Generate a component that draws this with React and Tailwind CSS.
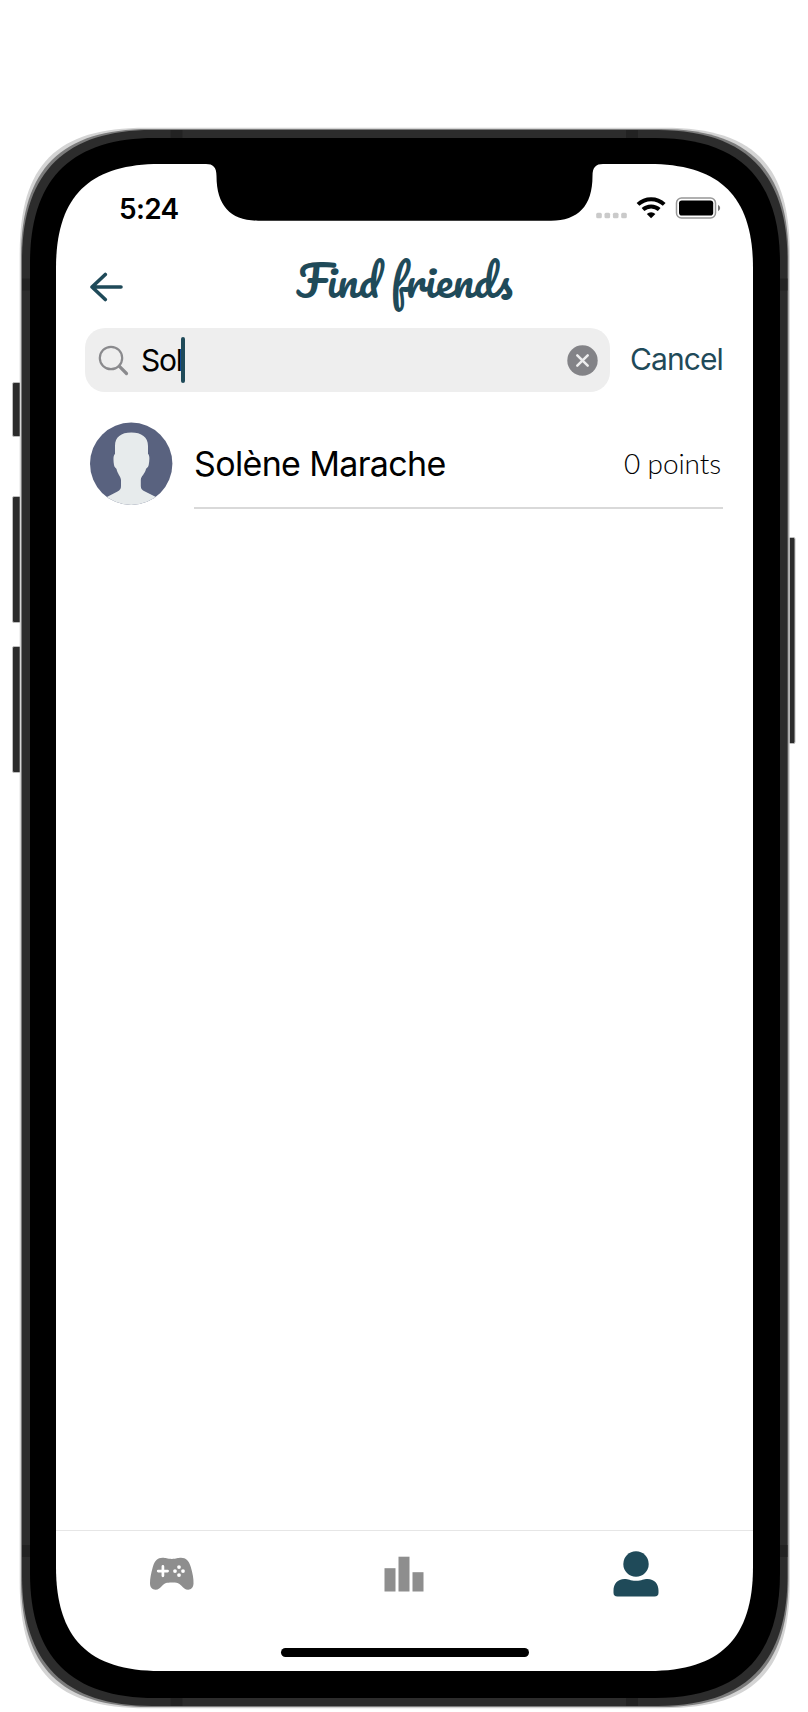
import React from "react";

const TEAL = "#1f4a59";

// Closed rounded rectangle with continuous-curvature corners.
function squircle(l, t, r, b, e, c) {
  const k = e * c;
  return [
    `M${l} ${t + e}`,
    `C${l} ${t + k} ${l + k} ${t} ${l + e} ${t}`,
    `H${r - e}`,
    `C${r - k} ${t} ${r} ${t + k} ${r} ${t + e}`,
    `V${b - e}`,
    `C${r} ${b - k} ${r - k} ${b} ${r - e} ${b}`,
    `H${l + e}`,
    `C${l + k} ${b} ${l} ${b - k} ${l} ${b - e}`,
    "Z",
  ].join(" ");
}

function PhoneHardware() {
  return (
    <svg className="col-start-1 row-start-1" width="808" height="1712" viewBox="0 0 808 1712" aria-hidden="true">
      <g fill="#2c2c2c" stroke="#bdbdbd" strokeWidth="1">
        <rect x="12.5" y="382.5" width="12" height="54" rx="1.5" />
        <rect x="12.5" y="496.5" width="12" height="126" rx="1.5" />
        <rect x="12.5" y="646.5" width="12" height="126" rx="1.5" />
        <rect x="784" y="537.5" width="11" height="206" rx="1.5" />
      </g>
      <path d={squircle(19.7, 127.7, 789.8, 1708.3, 126, 0.291)} fill="#d4d4d4" />
      <path d={squircle(21, 129, 788.5, 1707, 128, 0.313)} fill="#7c7c7c" />
      <path d={squircle(22, 130, 787.5, 1706, 130, 0.329)} fill="#2c2c2c" />
      <g fill="#222">
        <rect x="170.5" y="130" width="12" height="8" />
        <rect x="626" y="130" width="12" height="8" />
        <rect x="170.5" y="1698" width="12" height="8" />
        <rect x="626" y="1698" width="12" height="8" />
        <rect x="22" y="278.500" width="8" height="12" />
        <rect x="780" y="278.500" width="7.500" height="12" />
        <rect x="22" y="1545" width="8" height="12" />
        <rect x="780" y="1545" width="7.500" height="12" />
      </g>
      <path d={squircle(30, 138, 780, 1698, 125, 0.328)} fill="#000" />
      <path d={squircle(56, 164, 753, 1671, 104, 0.315)} fill="#fff" />
      <path
        d="M204 163 V164 H206 C213 164 216.500 167 216.500 176 C216.500 206 231 220.700 258 220.700 H551 C578 220.700 592.500 206 592.500 176 C592.500 167 596 164 603 164 H605 V163 Z"
        fill="#000"
      />
    </svg>
  );
}

function StatusIcons() {
  return (
    <svg width="126" height="25" viewBox="0 0 126 25" aria-hidden="true">
      <g fill="#cacaca">
        <rect x="0.200" y="17.700" width="5.600" height="5.600" rx="1.500" />
        <rect x="8.500" y="17.700" width="5.600" height="5.600" rx="1.500" />
        <rect x="16.900" y="17.700" width="5.600" height="5.600" rx="1.500" />
        <rect x="25.200" y="17.700" width="5.600" height="5.600" rx="1.500" />
      </g>
      <g fill="none" stroke="#000" strokeWidth="4">
        <path d="M42 9.400 A19 19 0 0 1 68.200 9.400" />
        <path d="M47 14.600 A12 12 0 0 1 63.200 14.600" />
      </g>
      <path d="M55.100 23.200 L50.800 18.900 A6.500 6.500 0 0 1 59.400 18.900 Z" fill="#000" />
      <rect x="80.500" y="3" width="39" height="19.900" rx="5" fill="none" stroke="#979797" strokeWidth="1.500" />
      <rect x="83" y="5.500" width="34.200" height="15" rx="2.800" />
      <path d="M122 9.800 Q124.200 11 124.200 13 Q124.200 15 122 16.200 Z" fill="#777" />
    </svg>
  );
}

function BackIcon() {
  return (
    <svg width="34" height="30" viewBox="0 0 34 30" fill="none" stroke={TEAL} strokeWidth="3.600" strokeLinecap="round" strokeLinejoin="round">
      <path d="M16.300 2.500 L3 15 L16.300 27.500 M3 15 H32" />
    </svg>
  );
}

function SearchIcon() {
  return (
    <svg width="31" height="31" viewBox="0 0 31 31" fill="none" stroke="#8a8a8d" strokeLinecap="round">
      <circle cx="13" cy="13" r="11.200" strokeWidth="2.200" />
      <path d="M21.200 21.200 L28.500 28.500" strokeWidth="3.200" />
    </svg>
  );
}

function ClearIcon() {
  return (
    <svg width="31" height="31" viewBox="0 0 31 31">
      <circle cx="15.500" cy="15.500" r="15.200" fill="#838387" />
      <path d="M10.300 10.300 L20.700 20.700 M20.700 10.300 L10.300 20.700" stroke="#eee" strokeWidth="2.500" strokeLinecap="round" />
    </svg>
  );
}

function Avatar() {
  return (
    <svg className="shrink-0" width="83" height="83" viewBox="0 0 83 83">
      <defs>
        <clipPath id="avatar-circle">
          <circle cx="41.200" cy="41.800" r="41.200" />
        </clipPath>
      </defs>
      <g clipPath="url(#avatar-circle)">
        <rect width="83" height="83" fill="#59627f" />
        <path
          d="M41.300 10.500 C31 10.500 25 15 25 24 V32 C23 33 23.300 39 24 43 C24.300 45.500 26 46 26.500 47 C27.500 52 30.500 54 31 58 V64 C31 67 30 68 27.500 69.500 L14 76.500 V84 H69 V76.500 L55 69.500 C52 68 50.800 67 50.800 64 V58 C51 54 55 52 56 47 C56.500 46 58.300 45.500 58.700 43 C59.500 39 60 33 58 32 V24 C58 15 51.500 10.500 41.300 10.500 Z"
          fill="#e7ebec"
        />
      </g>
    </svg>
  );
}

function GameIcon() {
  return (
    <svg width="46" height="34" viewBox="0 0 46 34">
      <path
        d="M13.500 0.800 C17 0.800 18 1.900 22.800 1.900 C27.600 1.900 28.600 0.800 32 0.800 C37 0.800 39.800 3.500 41.800 10 C43.600 16 44.700 22 44.500 26.500 C44.300 30.500 42.200 32.700 39.200 32.700 C36 32.700 34.700 31 32.200 28.500 C29.800 26 28 25.400 22.800 25.400 C17.500 25.400 15.800 26 13.400 28.500 C11 31 9.500 32.700 6.500 32.700 C3.300 32.700 1.100 30.500 1 26.500 C0.900 22 2.100 16 3.800 10 C5.800 3.500 8.500 0.800 13.500 0.800 Z"
        fill="#8e8e8e"
      />
      <path d="M13.900 9.400 V18.800 M9.200 14.100 H18.600" stroke="#fff" strokeWidth="2.700" strokeLinecap="round" />
      <g fill="#fff">
        <circle cx="30" cy="10.100" r="1.900" />
        <circle cx="30" cy="18.100" r="1.900" />
        <circle cx="26" cy="14.100" r="1.900" />
        <circle cx="34" cy="14.100" r="1.900" />
      </g>
    </svg>
  );
}

function RankingIcon() {
  return (
    <svg width="40" height="36" viewBox="0 0 40 36" fill="#8e8e8e">
      <rect x="0.500" y="12.200" width="11" height="23.300" />
      <rect x="14.500" y="0.700" width="11" height="34.800" />
      <rect x="28.500" y="16.200" width="11" height="19.300" />
    </svg>
  );
}

function ProfileIcon() {
  return (
    <svg width="46" height="46" viewBox="0 0 46 46" fill={TEAL}>
      <circle cx="23" cy="13" r="12.700" />
      <path d="M11.500 28 C15.500 28 17 29.700 23 29.700 C29 29.700 30.500 28 34.500 28 C41.500 28 45.500 33 45.500 39.500 V41.700 Q45.500 45.500 41.500 45.500 H4.500 Q0.500 45.500 0.500 41.700 V39.500 C0.500 33 4.500 28 11.500 28 Z" />
    </svg>
  );
}

export default function App() {
  return (
    <div className="grid h-[1712px] w-[808px] overflow-hidden bg-white font-['Inter',sans-serif] text-black">
      <PhoneHardware />
      <main className="z-10 col-start-1 row-start-1 mt-[164px] ml-[56px] flex h-[1507px] w-[697px] flex-col">
        <div className="flex h-[78px] items-start justify-between pt-[31px] pr-[31px] pl-[63px]">
          <span className="text-[28px] leading-[28px] font-semibold tracking-[-0.7px]">5:24</span>
          <StatusIcons />
        </div>

        <header className="grid h-[86px] grid-cols-[80px_1fr_80px] items-center">
          <button className="pt-[4px] pl-[33px]" aria-label="Back">
            <BackIcon />
          </button>
          <h1 className="pb-[11px] text-center font-['Pacifico',cursive] text-[42.75px] leading-[60px] font-normal whitespace-nowrap text-[#1f4a59]">
            Find friends
          </h1>
        </header>

        <div className="flex h-16 items-center pl-[29px]">
          <div className="flex h-16 w-[525px] items-center rounded-[20px] bg-[#eeeeee] pr-[12px] pl-[13px]">
            <SearchIcon />
            <span className="ml-[12px] pt-px text-[30px] tracking-[-1.2px]">Sol</span>
            <span className="-ml-px h-[46px] w-[4px] rounded-sm bg-[#1f4a59]" />
            <span className="ml-auto">
              <ClearIcon />
            </span>
          </div>
          <button className="ml-[20px] pb-[2px] text-[30px] tracking-[-0.9px] text-[#1f4a59]">Cancel</button>
        </div>

        <section className="mt-[30px] flex pl-[34px]">
          <Avatar />
          <div className="ml-[21px] flex h-[87px] w-[529px] items-center justify-between border-b-2 border-[#d9d9d9] pr-[2px] pb-[3px]">
            <span className="text-[34px] tracking-[-0.65px]">Solène Marache</span>
            <span className="font-['Lato',sans-serif] text-[28px] font-light tracking-[-0.1px]">0 points</span>
          </div>
        </section>

        <nav className="mt-auto flex h-[141px] flex-col border-t border-[#e6e6e6]">
          <div className="grid h-[88px] grid-cols-3 place-items-center pr-px pb-[3px]">
            <GameIcon />
            <RankingIcon />
            <ProfileIcon />
          </div>
          <div className="mt-[29px] h-[9px] w-[248px] self-center rounded-full bg-black" />
        </nav>
      </main>
    </div>
  );
}
